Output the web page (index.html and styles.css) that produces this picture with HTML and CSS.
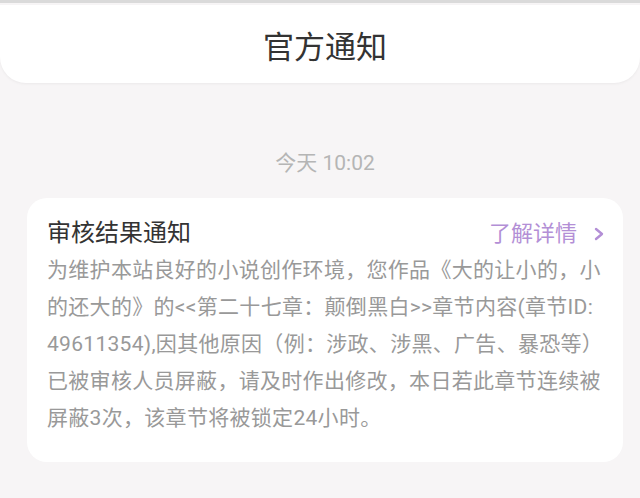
FILE: index.html
```html
<!DOCTYPE html>
<html lang="zh-CN">
<head>
<meta charset="utf-8">
<title>官方通知</title>
<link rel="stylesheet" href="styles.css">
</head>
<body>
<div class="topline"></div>
<header class="header">
  <h1 class="header-title">官方通知</h1>
</header>
<main class="main">
  <div class="time">今天 10:02</div>
  <section class="card">
    <div class="card-head">
      <h2 class="card-title">审核结果通知</h2>
      <a class="card-link" href="#">了解详情
        <svg class="chevron" width="12" height="14" viewBox="0 0 12 14" aria-hidden="true">
          <polyline points="3,2 9,7 3,12" fill="none" stroke="#b38fd6" stroke-width="2.4" stroke-linecap="round" stroke-linejoin="round"/>
        </svg>
      </a>
    </div>
    <p class="card-body">为维护本站良好的小说创作环境，您作品《大的让小的，小的还大的》的&lt;&lt;第二十七章：颠倒黑白&gt;&gt;章节内容(章节ID:<br>49611354),因其他原因（例：涉政、涉黑、广告、暴恐等）已被审核人员屏蔽，请及时作出修改，本日若此章节连续被屏蔽3次，该章节将被锁定24小时。</p>
  </section>
</main>
</body>
</html>
```

FILE: styles.css
```css
html, body {
  margin: 0;
  padding: 0;
}
body {
  background: #f7f5f6;
  font-family: "Roboto", "Noto Sans CJK SC", "Noto Sans", sans-serif;
  width: 640px;
  height: 498px;
  overflow: hidden;
}
.topline {
  height: 3px;
  background: #dadada;
}
.header {
  margin-top: 2px;
  height: 68px;
  padding-top: 10px;
  padding-left: 10px;
  background: #ffffff;
  border-radius: 0 0 26px 26px;
  box-shadow: 0 1px 3px rgba(0, 0, 0, 0.05);
  text-align: center;
}
.header-title {
  margin: 0;
  font-size: 31px;
  font-weight: 400;
  line-height: 66px;
  color: #333333;
}
.main {
  margin: 0 17px 0 27px;
}
.time {
  margin-top: 68px;
  font-size: 21px;
  line-height: 24px;
  text-align: center;
  color: #b5b5b5;
}
.card {
  margin-top: 23px;
  background: #ffffff;
  border-radius: 20px;
  padding: 17px 20px 25px 20px;
}
.card-head {
  display: flex;
  align-items: center;
  justify-content: space-between;
  height: 37px;
}
.card-title {
  margin: 0;
  font-size: 24px;
  font-weight: 400;
  line-height: 37px;
  color: #333333;
}
.card-link {
  display: flex;
  align-items: center;
  gap: 16px;
  font-size: 22px;
  line-height: 37px;
  color: #b38fd6;
  text-decoration: none;
  margin-right: -2px;
}
.chevron {
  display: block;
}
.card-body {
  margin: 0;
  font-size: 21px;
  letter-spacing: 0.3px;
  line-height: 37px;
  color: #999999;
  word-break: break-all;
}
```
